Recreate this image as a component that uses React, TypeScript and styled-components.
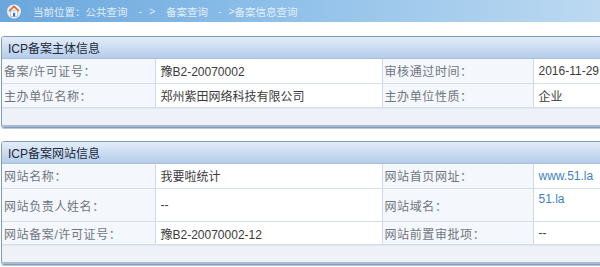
import React from 'react';
import styled, {createGlobalStyle} from 'styled-components';

const Global = createGlobalStyle`
  html, body {
    margin: 0;
    padding: 0;
    background: #ffffff;
    overflow: hidden;
  }
  body {
    font-family: "Liberation Sans", "Noto Sans CJK SC", sans-serif;
    font-size: 12px;
  }
`;

const Page = styled.div`
  width: 600px;
  height: 267px;
  overflow: hidden;
`;

const TopBar = styled.div`
  height: 22px;
  display: flex;
  align-items: center;
  padding-left: 6px;
  background: linear-gradient(to right, #6aa6dc 0%, #8dbfe9 45%, #bcd9f1 100%);
  color: #eaf4fc;
  font-size: 10.5px;
  white-space: pre;
`;

const HomeWrap = styled.span`
  display: flex;
  margin-right: 11px;
`;

const Crumb = styled.span`
  opacity: 0.92;
`;

const Sep = styled.span<{ml: number; mr: number}>`
  margin-left: ${({ml}) => ml}px;
  margin-right: ${({mr}) => mr}px;
  word-spacing: 4px;
  opacity: 0.92;
`;

const Panel = styled.div<{top: number}>`
  margin-top: ${({top}) => top}px;
  margin-left: 1px;
  width: 660px;
  border: 1px solid #7f9cbd;
  border-radius: 3px;
  box-shadow: 0 1px 0 #b9c7d8;
  overflow: hidden;
`;

const PanelHead = styled.div`
  height: 21px;
  display: flex;
  align-items: center;
  padding-left: 6px;
  background: linear-gradient(to bottom, #e3edf9 0%, #c9dbf1 55%, #b5cce9 100%);
  border-bottom: 1px solid #a9bfd9;
  color: #1d2a38;
  font-size: 12px;
`;

const Table = styled.table`
  width: 100%;
  border-collapse: collapse;
  table-layout: fixed;
`;

const Row = styled.tr<{h: number}>`
  height: ${({h}) => h}px;
`;

const Label = styled.td<{w: number}>`
  box-sizing: border-box;
  width: ${({w}) => w}px;
  background: #f4f7fb;
  color: #70767e;
  border-right: 1px solid #cfdae6;
  border-bottom: 1px solid #d6dee8;
  padding: 0 0 0 2px;
  letter-spacing: 0.6px;
  white-space: nowrap;
`;

const Value = styled.td<{w?: number; top?: boolean}>`
  box-sizing: border-box;
  ${({w}) => (w ? `width: ${w}px;` : '')}
  background: #ffffff;
  color: #3b3b3b;
  border-right: 1px solid #cfdae6;
  border-bottom: 1px solid #d6dee8;
  padding: ${({top}) => (top ? '3px 0 0 5px' : '0 0 0 5px')};
  vertical-align: ${({top}) => (top ? 'top' : 'middle')};
  white-space: nowrap;
`;

const Link = styled.span`
  color: #3d82c4;
`;

const Foot = styled.div`
  height: 16px;
  background: #eef2f8;
  border-top: 1px solid #e2e8f0;
  border-bottom: 2px solid #aab9cb;
`;

const HomeIcon = () => (
  <svg width="16" height="16" viewBox="0 0 16 16">
    <circle cx="8" cy="8.5" r="7" fill="#e9eef5" />
    <path d="M2.5 8.2 L8 3 L13.5 8.2 L12.3 8.2 L8 4.4 L3.7 8.2 Z" fill="#f08a2c" />
    <path d="M3 8 L8 3.3 L13 8" fill="none" stroke="#e4661b" strokeWidth="1.4" strokeLinejoin="round" />
    <rect x="4.5" y="8" width="7" height="5.5" fill="#ffffff" stroke="#9aa8b8" strokeWidth="0.6" />
    <rect x="7" y="9.8" width="2.2" height="3.7" fill="#3a78c2" />
  </svg>
);

export default function App() {
  return (
    <Page>
      <Global />
      <TopBar>
        <HomeWrap>
          <HomeIcon />
        </HomeWrap>
        <Crumb>当前位置：公共查询</Crumb>
        <Sep ml={11} mr={11}>
          {'- >'}
        </Sep>
        <Crumb>备案查询</Crumb>
        <Sep ml={10} mr={0}>
          {'- >'}
        </Sep>
        <Crumb>备案信息查询</Crumb>
      </TopBar>

      <Panel top={14}>
        <PanelHead>ICP备案主体信息</PanelHead>
        <Table>
          <tbody>
            <Row h={24}>
              <Label w={153}>备案/许可证号：</Label>
              <Value w={227}>豫B2-20070002</Value>
              <Label w={151}>审核通过时间：</Label>
              <Value>2016-11-29</Value>
            </Row>
            <Row h={24}>
              <Label w={153}>主办单位名称：</Label>
              <Value w={227}>郑州紫田网络科技有限公司</Value>
              <Label w={151}>主办单位性质：</Label>
              <Value>企业</Value>
            </Row>
          </tbody>
        </Table>
        <Foot />
      </Panel>

      <Panel top={13}>
        <PanelHead>ICP备案网站信息</PanelHead>
        <Table>
          <tbody>
            <Row h={25}>
              <Label w={153}>网站名称：</Label>
              <Value w={227}>我要啦统计</Value>
              <Label w={151}>网站首页网址：</Label>
              <Value>
                <Link>www.51.la</Link>
              </Value>
            </Row>
            <Row h={33}>
              <Label w={153}>网站负责人姓名：</Label>
              <Value w={227}>--</Value>
              <Label w={151}>网站域名：</Label>
              <Value top>
                <Link>51.la</Link>
              </Value>
            </Row>
            <Row h={23}>
              <Label w={153}>网站备案/许可证号：</Label>
              <Value w={227}>豫B2-20070002-12</Value>
              <Label w={151}>网站前置审批项：</Label>
              <Value>--</Value>
            </Row>
          </tbody>
        </Table>
        <Foot />
      </Panel>
    </Page>
  );
}
